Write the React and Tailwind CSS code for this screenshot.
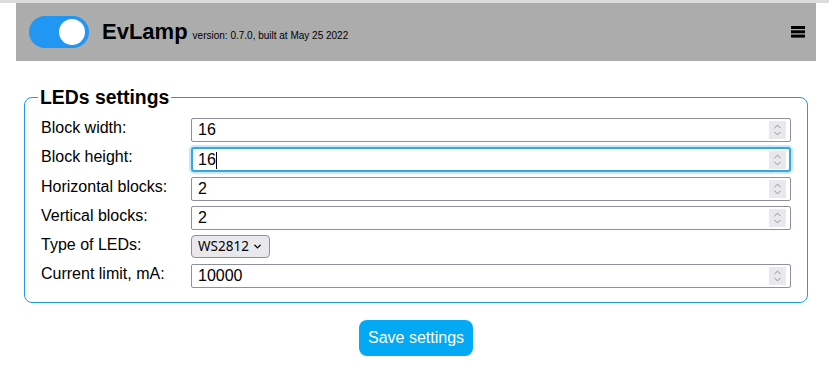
import { ChevronUp, ChevronDown } from 'lucide-react';

const fields = [
  { label: 'Block width:', value: '16' },
  { label: 'Block height:', value: '16', focused: true },
  { label: 'Horizontal blocks:', value: '2' },
  { label: 'Vertical blocks:', value: '2' },
  { label: 'Type of LEDs:', select: true },
  { label: 'Current limit, mA:', value: '10000' },
];

function NumberField({ value, focused }) {
  return (
    <div
      className={
        focused
          ? 'relative flex h-[25px] items-center rounded-[3px] border-2 border-[#3aa5e4] bg-white pl-[5px] pr-[3px] shadow-[0_0_0_2px_#c8ecfd]'
          : 'relative flex h-[24px] items-center rounded-[2px] border border-[#8f8f9d] bg-white pl-[6px] pr-[4px]'
      }
    >
      <input
        type="text"
        defaultValue={value}
        className="min-w-0 flex-1 bg-transparent text-[16px] text-black outline-none"
      />
      {focused && (
        <span className="absolute left-[23px] top-[3px] h-[17px] w-px bg-black" />
      )}
      <span className="flex h-[18px] w-[17px] flex-col items-center justify-center bg-[#e9e9ed] text-[#85858f]">
        <ChevronUp size={11} strokeWidth={2} className="-mb-[2px]" />
        <ChevronDown size={11} strokeWidth={2} className="-mt-[2px]" />
      </span>
    </div>
  );
}

export default function App() {
  return (
    <div className="min-h-[389px] bg-white font-['Liberation_Sans',Arial,sans-serif] text-black">
      <div className="h-[3px] bg-[#dcdcdc]" />
      <div className="w-[800px] ml-4">
        {/* Header */}
        <header className="h-[58px] bg-[#acacac] flex items-center pl-[13px] pr-[11px]">
          <button
            aria-label="Power"
            className="h-[32px] w-[60px] rounded-full bg-[#2196f3] flex items-center justify-end pr-[4px]"
          >
            <span className="h-[26px] w-[26px] rounded-full bg-white" />
          </button>
          <div className="ml-[13px] flex items-baseline gap-[5px]">
            <span className="text-[22px] font-bold leading-none">EvLamp</span>
            <span className="text-[10px] leading-none">version: 0.7.0, built at May 25 2022</span>
          </div>
          <div className="flex-1" />
          <svg width="14" height="12" viewBox="0 0 14 12" aria-label="Menu">
            <rect x="0" y="0" width="14" height="3" fill="#000" />
            <rect x="0" y="4.3" width="14" height="3" fill="#000" />
            <rect x="0" y="8.6" width="14" height="3" fill="#000" />
          </svg>
        </header>

        {/* LEDs settings */}
        <fieldset className="mx-2 mt-[25px] rounded-lg border border-[#1e9ae6] px-4 pb-[14px] pt-[9px]">
          <legend className="-ml-[3px] px-0.5 text-[19.4px] font-bold leading-[23px]">LEDs settings</legend>
          <div className="grid grid-cols-[150px_1fr] gap-y-[5px]">
            {fields.map((f) => (
              <div key={f.label} className="contents">
                <label className="h-[24px] text-[16px] leading-[18px] pt-px">{f.label}</label>
                {f.select ? (
                  <div className="h-[24px]">
                    <div className="flex h-[23px] w-[79px] items-center rounded-[4px] border border-[#8f8f9d] bg-[#e9e9ed] pl-[6px] pr-[6px] font-['Noto_Sans','Open_Sans',sans-serif] text-[13.5px]">
                      <span className="flex-1">WS2812</span>
                      <ChevronDown size={11} strokeWidth={3} />
                    </div>
                  </div>
                ) : (
                  <NumberField value={f.value} focused={f.focused} />
                )}
              </div>
            ))}
          </div>
        </fieldset>

        <div className="flex justify-center pt-[17px]">
          <button className="h-[36px] w-[114px] rounded-lg bg-[#03a9f4] text-[16px] text-white">
            Save settings
          </button>
        </div>
      </div>
    </div>
  );
}
